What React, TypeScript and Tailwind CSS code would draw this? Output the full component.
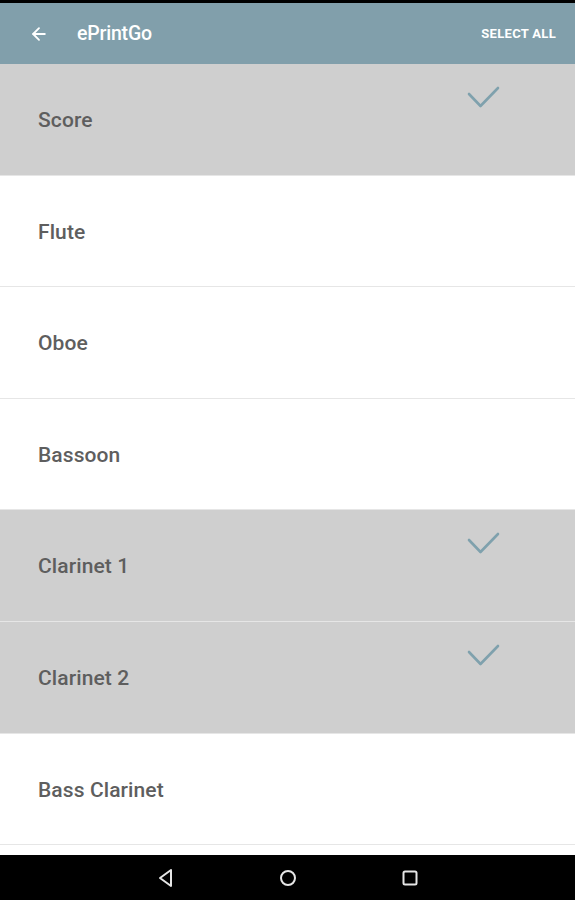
import { ArrowLeft } from "lucide-react";

const parts = [
  { name: "Score", selected: true },
  { name: "Flute", selected: false },
  { name: "Oboe", selected: false },
  { name: "Bassoon", selected: false },
  { name: "Clarinet 1", selected: true },
  { name: "Clarinet 2", selected: true },
  { name: "Bass Clarinet", selected: false },
];

function Check() {
  return (
    <svg width="34" height="24" viewBox="0 0 34 24" fill="none" className="absolute right-[75px] top-[22px]">
      <path d="M3 8 L14.5 20 L32 2" stroke="#7fa1ad" strokeWidth="2.6" strokeLinecap="round" strokeLinejoin="round" />
    </svg>
  );
}

export default function App() {
  return (
    <div className="w-[575px] h-[900px] flex flex-col overflow-hidden bg-white" style={{ fontFamily: "Roboto, 'Liberation Sans', sans-serif" }}>
      <div className="h-[3px] bg-black shrink-0" />
      {/* Toolbar */}
      <div className="h-[61px] shrink-0 bg-[#819fab] flex items-center text-white">
        <ArrowLeft size={20} strokeWidth={2.2} className="ml-[29px]" />
        <span className="ml-[28px] text-[19.5px] font-medium tracking-[-0.2px]">ePrintGo</span>
        <span className="ml-auto mr-[19px] text-[13px] font-bold tracking-[0.3px]">SELECT ALL</span>
      </div>

      {/* Part list */}
      <div className="flex-1 flex flex-col overflow-hidden">
        {parts.map((p) => (
          <div
            key={p.name}
            className={`relative h-[111.6px] shrink-0 flex items-center pl-[38px] border-b border-[#e6e6e6] ${p.selected ? "bg-[#cfcfcf]" : "bg-white"}`}
          >
            <span className="text-[21px] font-medium text-[#5e5e5e] tracking-[0.1px] pt-[3px]">{p.name}</span>
            {p.selected && <Check />}
          </div>
        ))}
        <div className="flex-1 bg-white" />
      </div>

      {/* Nav bar */}
      <div className="h-[45px] shrink-0 bg-black flex items-center justify-center gap-[100px]">
        <svg width="22" height="22" viewBox="0 0 22 22" fill="none">
          <path d="M16 3 L5 11 L16 19 Z" stroke="#e6e6e6" strokeWidth="2" strokeLinejoin="round" />
        </svg>
        <svg width="22" height="22" viewBox="0 0 22 22" fill="none">
          <circle cx="11" cy="11" r="7" stroke="#e6e6e6" strokeWidth="2" />
        </svg>
        <svg width="22" height="22" viewBox="0 0 22 22" fill="none">
          <rect x="4.5" y="4.5" width="13" height="13" rx="1.5" stroke="#e6e6e6" strokeWidth="2" />
        </svg>
      </div>
    </div>
  );
}
